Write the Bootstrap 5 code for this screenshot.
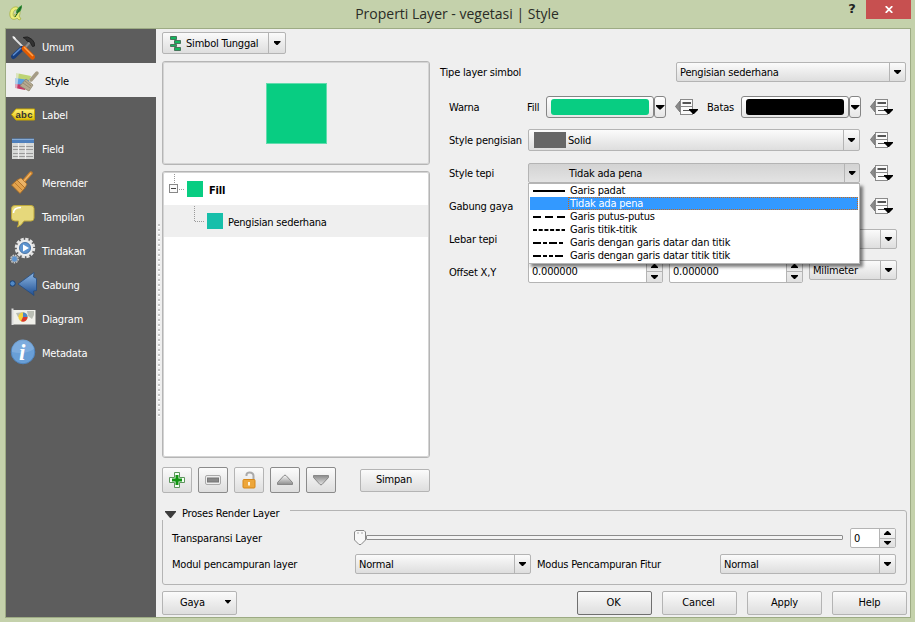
<!DOCTYPE html>
<html lang="id">
<head>
<meta charset="utf-8">
<title>Properti Layer - vegetasi | Style</title>
<link href="https://cdn.jsdelivr.net/npm/bootstrap@5.3.0/dist/css/bootstrap.min.css" rel="stylesheet">
<style>
html,body{height:100%}
body{width:915px;height:622px;overflow:hidden;background:#c4d1ab;font-family:"DejaVu Sans Condensed","DejaVu Sans",sans-serif;font-stretch:condensed;font-size:11px;line-height:14px;letter-spacing:-.2px;color:#000}
.titlebar{height:28px;padding-left:9px}
.title-text{font:14px/28px "Open Sans",sans-serif;letter-spacing:0;color:#2a2c26;padding:0 0 0 51px}
.title-help{font:bold 13px/18px "DejaVu Sans",sans-serif;width:28px;color:#222}
.title-close{width:45px;height:19px;background:#c75050;margin-right:4px}
.frame{margin:0 4px 0 5px;height:590px;border:1px solid #9dab84;background:#efefef}
.sidebar{width:150px;background:#5d5d5d;border-radius:0}
.sidebar .list-group-item{height:34px;padding:3px 0 0 4px;border:0;border-radius:0;background:transparent;color:#fff;gap:4px}
.sidebar .list-group-item.active{background:#efefef;color:#000;padding-left:7px;margin:0}
.sidebar svg{width:28px;height:28px;flex:none;margin-top:-2px}
.splitter{width:6px;padding:195px 2px 0 2px}
.splitter div{height:194px;background:repeating-linear-gradient(#c4c4c4 0 2px,#fff 2px 3px,transparent 3px 5px)}
.content-area{width:748px;padding-top:3px}
.leftcol{width:268px}
.rightcol{width:466px;margin-left:10px;padding-top:30px}
.qbtn,.combo{height:23px;border:1px solid #b4b4b4;border-radius:2px;background:linear-gradient(#fbfbfb,#ececec 50%,#dedede);padding:0;font-size:inherit;line-height:14px;color:#000;letter-spacing:inherit}
.qbtn.dark{border-color:#8b8b8b}
.qbtn.default{border-color:#6f6f6f}
.combo{height:20px;display:flex;align-items:center;padding:1px 0 0 3px;border-width:1px;flex:none}
.combo .drop{margin:-1px 0 0 auto;width:16px}
.drop{align-self:stretch;border-left:1px solid #b4b4b4;display:flex;align-items:center;justify-content:center}
.arr{width:7px;height:4px;background:#000;clip-path:polygon(0 0,100% 0,100% 25%,57% 100%,43% 100%,0 25%)}
.arr.up{transform:rotate(180deg)}
.arr.big{width:9px;height:5px}
.symbtn{width:124px;height:22px}
.preview{height:104px;margin-top:7px;border:1px solid #b5b5b5;outline:1px solid #d4d4d4;outline-offset:-2px;border-radius:3px}
.preview div{width:61px;height:61px;background:#08cd82;border:1px solid #62dcae;margin-left:1px}
.tree{height:287px;margin-top:6px;border:1px solid #b5b5b5;outline:1px solid #d4d4d4;outline-offset:-2px;border-radius:3px;background:#fff;padding:1px}
.trow{height:32px}
.trow.sel{background:#efefef}
.trow b,.trow span{padding-top:3px}
.sw16{width:16px;height:16px;flex:none}
.tools{margin-top:9px;height:26px;gap:6px}
.tools .tool{width:30px;height:26px;display:flex;align-items:center;justify-content:center}
.frow{display:flex;align-items:center}
.frow>span{padding-top:2px}
.frow .lbl{width:79px;margin-left:9px;flex:none;white-space:nowrap}
.colbtn{width:108px;height:22px;border:1px solid #858585;border-radius:3px;background:linear-gradient(#fff,#e6e6e6);padding:2px 4px;flex:none}
.colbtn div{height:16px;border-radius:3px}
.coldrop{width:12px;height:22px;border:1px solid #858585;border-radius:3px;background:linear-gradient(#fff,#e6e6e6);flex:none}
.ddicon{width:24px;height:20px;flex:none}
.spin{height:22px;border:1px solid #b4b4b4;border-radius:2px;background:#fff;padding:1px 0 0 3px;flex:none;overflow:hidden}
.spin .steps{width:16px;margin:-1px 0 0 auto;border-left:1px solid #b4b4b4;background:linear-gradient(#f6f6f6,#e0e0e0);align-self:stretch}
.spin .steps>div{flex:1;display:flex;align-items:center;justify-content:center}
.spin .steps>div+div{border-top:1px solid #b4b4b4}
.popup{position:absolute;left:-1px;top:19px;width:332px;height:81px;z-index:5;background:#fff;border:1px solid #b5b5b5;box-shadow:3px 3px 3px rgba(0,0,0,.5);padding:0 1px}
.popup .opt{height:13px;display:flex;align-items:center;line-height:13px;white-space:nowrap}
.popup .opt svg{width:32px;height:4px;margin:0 5px 0 3px;flex:none}
.popup .opt.on{background:#3399ff;color:#fff}
.popup .opt.on span{outline:1px dotted #c86a1c;outline-offset:-1px;flex:1;line-height:13px;margin-left:38px;padding-left:2px}
.renderbox{width:745px;height:75px;margin-top:16px;border:1px solid #b4b4b4;border-radius:3px}
.legend-lbl{width:128px;height:18px;margin:-9px 0 0 -1px;background:#efefef;padding:6px 0 0 3px}
.footer-row{width:745px;margin-top:6px;height:24px}
.footer-row .qbtn{width:75px;height:24px}
.groove{height:5px;width:477px;border:1px solid #8c8c8c;background:#f4f4f4;border-radius:1px;margin-top:-1px}
</style>
<script src="https://cdn.jsdelivr.net/npm/bootstrap@5.3.0/dist/js/bootstrap.bundle.min.js"></script>
</head>
<body>
<svg width="0" height="0" class="d-block" style="height:0">
<defs>
<linearGradient id="gb" x1="0" y1="0" x2="0" y2="1"><stop offset="0" stop-color="#8fb8e4"/><stop offset="1" stop-color="#1f4f93"/></linearGradient>
<linearGradient id="gg" x1="0" y1="0" x2="0" y2="1"><stop offset="0" stop-color="#fafafa"/><stop offset="1" stop-color="#8e8e8e"/></linearGradient>
<linearGradient id="gd" x1="0" y1="0" x2="0" y2="1"><stop offset="0" stop-color="#8a8a8a"/><stop offset="1" stop-color="#e4e4e4"/></linearGradient>
<linearGradient id="gy" x1="0" y1="0" x2="0" y2="1"><stop offset="0" stop-color="#fff27a"/><stop offset="1" stop-color="#dfbf00"/></linearGradient>
<symbol id="dd" viewBox="0 0 24 20"><path d="M1.500 9.500 6 4V15Z" fill="#8a8a8a" stroke="#777"/><rect x="6.500" y="2.500" width="12" height="15" fill="#fafafa" stroke="#8a8a8a"/><path d="M6 9.500H19" stroke="#8a8a8a"/><path d="M8.500 6H17" stroke="#555" stroke-width="2"/><path d="M9 13.500H17" stroke="#555"/><path d="M15 12H24V13L20 17H19L15 13Z" fill="#000"/></symbol>
</defs>
</svg>

<header class="titlebar d-flex">
  <svg width="16" height="28" viewBox="0 0 16 28"><path d="M8 7C3 6 0 11 1 16c1 4 5 4 7 2l2 2 2-1-2-3c2-3 1-8-2-9Zm-2 3c4-1 3 3 2 5l-2-1-1 1 1 2c-3 0-2-6 0-7Z" fill="#ecee7c" stroke="#a2ad3c" stroke-width=".7"/><path d="M13 5C9 7 7 10 7 13c4 0 6-3 6-8Z" fill="#2c8a32"/><path d="M12 7 6 17" stroke="#165d20"/></svg>
  <div class="title-text flex-grow-1 text-center">Properti Layer - vegetasi | Style</div>
  <div class="title-help text-center">?</div>
  <div class="title-close d-flex align-items-center justify-content-center"><svg width="8" height="7" viewBox="0 0 8 7"><path d="M.7.2 7.300 6.800M7.300.2.7 6.800" stroke="#fff" stroke-width="1.800"/></svg></div>
</header>

<div class="frame d-flex">
  <nav class="sidebar list-group">
    <div class="list-group-item d-flex align-items-center"><svg viewBox="0 0 28 28"><path d="M3 4 16 17" stroke="#ddd" stroke-width="1.800"/><path d="M2 3 5 4 6 7Z" fill="#fff"/><path d="M21 8 13 17" stroke="#8d8d8d" stroke-width="2"/><path d="M13 4.500Q18 2.500 22 6.500Q25 9 24.500 13L22.500 13.500 20 9 17 8 15.500 5.800Z" fill="#333" stroke="#222"/><path d="M3.500 23.500 12 15.500" stroke="#183e7d" stroke-width="5" stroke-linecap="round"/><path d="M3 22.500 11 15" stroke="#5e8ed0" stroke-width="1.500"/><path d="M14 15.500 22.500 24" stroke="#e25a00" stroke-width="5" stroke-linecap="round"/><path d="M14 14 23 23" stroke="#ffa14a" stroke-width="1.500"/></svg>Umum</div>
    <div class="list-group-item active d-flex align-items-center"><svg viewBox="0 0 28 28"><path d="M3 6 18 9 16 14 3 12Z" fill="#bdd474"/><path d="M2 11 16 13 14 19 2 18Z" fill="#5aa0e0"/><path d="M2 17 13 18 12 23 2 21Z" fill="#c73767"/><path d="M1 5H6L4 23H1Z" fill="#efefef" opacity=".6"/><path d="M24 6 18 13" stroke="#a59c86" stroke-width="3.500" stroke-linecap="round"/><path d="M13 12 20 18 16 24 7 19Z" fill="#b5aa91" stroke="#8e866f" stroke-width=".8"/><path d="M12 14 18 19M10 16 17 21" stroke="#968b73"/></svg>Style</div>
    <div class="list-group-item d-flex align-items-center"><svg viewBox="0 0 28 28"><path d="M1.500 13.500 6 8H24.500V19H6Z" fill="url(#gy)" stroke="#c9a800"/><text x="5.500" y="16.500" font-family="Liberation Sans" font-weight="bold" font-size="9.500" letter-spacing="0" fill="#333" textLength="17">abc</text></svg>Label</div>
    <div class="list-group-item d-flex align-items-center"><svg viewBox="0 0 28 28"><path d="M2 4H24V24H2Z" fill="#d7d9d7"/><path d="M2 3.500H24V8H2Z" fill="#4e80bd"/><path d="M2 4.500H24" stroke="#85aad5"/><path d="M3 11.500H23M3 14.500H23M3 18.500H23M3 21.500H23" stroke="#999"/><path d="M8.500 8V24M15.500 8V24" stroke="#eee" stroke-width="1.200"/></svg>Field</div>
    <div class="list-group-item d-flex align-items-center"><svg viewBox="0 0 28 28"><path d="M21 4 13 13" stroke="#c9812c" stroke-width="3.500" stroke-linecap="round"/><path d="M21 4 14 12" stroke="#f0b66a" stroke-width="1.300"/><path d="M7 11 15 19 10 24.500 1.500 16Z" fill="#e2a24d" stroke="#a76920" stroke-width=".8"/><path d="M7 11 11 9 17 15 15 19Z" fill="#eab266" stroke="#a76920" stroke-width=".7"/><path d="M5 14 12 21" stroke="#bb7c30"/></svg>Merender</div>
    <div class="list-group-item d-flex align-items-center"><svg viewBox="0 0 28 28"><path d="M5 2.500H21Q24 2.500 24 5.500V15Q24 18 21 18H14Q12 22 7.500 24Q9 21 8.500 18H5Q1.500 18 1.500 15V5.500Q1.500 2.500 5 2.500Z" fill="#e6d87b" stroke="#bfa93c"/><path d="M3.500 10Q3.500 4.500 11 4.500" stroke="#fff" stroke-width="1.500" fill="none"/></svg>Tampilan</div>
    <div class="list-group-item d-flex align-items-center"><svg viewBox="0 0 28 28"><circle cx="15" cy="11" r="9" fill="none" stroke="#e3e3e3" stroke-width="2.500" stroke-dasharray="3.200 1.510"/><circle cx="15" cy="11" r="7" fill="#5e94cf" stroke="#ececec" stroke-width="2.500"/><circle cx="15" cy="11" r="5.600" fill="none" stroke="#3b6596" stroke-width=".7"/><path d="M13 7.500 19 11 13 14.500Z" fill="#fff"/><circle cx="4.500" cy="22" r="3.700" fill="none" stroke="#ccc" stroke-width="1.500" stroke-dasharray="1.500 1"/><circle cx="4.500" cy="22" r="3" fill="#5e94cf" stroke="#bbb" stroke-width=".6"/></svg>Tindakan</div>
    <div class="list-group-item d-flex align-items-center"><svg viewBox="0 0 28 28"><circle cx="2.500" cy="12.500" r="2.700" fill="#5189c7" stroke="#173f73"/><path d="M8 13 24 1.500 23.500 6 26.500 7.500V19.500L23.500 20 24 24.500Z" fill="url(#gb)" stroke="#234b80" stroke-width=".8"/></svg>Gabung</div>
    <div class="list-group-item d-flex align-items-center"><svg viewBox="0 0 28 28"><path d="M3 5H25.500V19.500H3Z" fill="#f0f0ea"/><path d="M6 8 14 7 12 12 8 12ZM17 6H24V10L22 14 18 11Z" fill="#b9bdb3"/><path d="M2.500 3.500V20" stroke="#ddd" stroke-width="2"/><circle cx="13" cy="12" r="4.600" fill="#f4d13d"/><path d="M13 12V7.400A4.600 4.600 0 0 1 17.600 12Z" fill="#4b86c8"/><path d="M13 12H17.600A4.600 4.600 0 0 1 11 16.200Z" fill="#d93630"/></svg>Diagram</div>
    <div class="list-group-item d-flex align-items-center"><svg viewBox="0 0 28 28"><circle cx="13" cy="13" r="11.800" fill="#699fd7" stroke="#4f84bd"/><path d="M2 13A11 11 0 0 1 24 10Q15 16 2 13Z" fill="#8bb6e2" opacity=".6"/><text x="9" y="21" font-family="Liberation Serif" font-style="italic" font-weight="bold" font-size="23" fill="#fff">i</text></svg>Metadata</div>
  </nav>
  <div class="splitter"><div></div></div>

  <main class="content-area">
    <div class="d-flex">
      <section class="leftcol">
        <button class="btn qbtn symbtn d-flex align-items-center"><svg width="12" height="16" viewBox="0 0 12 16" class="flex-shrink-0" style="margin:0 4px 0 7px"><g fill="#12b75d" stroke="#47755b"><path d="M.5 1.500H6.500V4.500H.5ZM4.500 5.500H10.500V8.500H4.500ZM.5 9.500H6.500V11.500H.5ZM4.500 12.500H10.500V15.500H4.500Z"/></g></svg><span style="margin-top:1px">Simbol Tunggal</span><span class="drop ms-auto" style="width:17px"><i class="arr"></i></span></button>
        <div class="preview d-flex align-items-center justify-content-center"><div></div></div>
        <div class="tree">
          <div class="trow d-flex align-items-center"><svg width="18" height="32" viewBox="0 0 18 32" class="flex-shrink-0" style="margin-left:4px"><path d="M6.500 1V10" stroke="#999" stroke-dasharray="1 1"/><rect x="1.500" y="11.500" width="8" height="8" fill="#fafafa" stroke="#888"/><path d="M3 15.500H8" stroke="#444"/><path d="M11 16.500H16" stroke="#999" stroke-dasharray="1 1"/></svg><i class="sw16" style="background:#08cd82;margin:0 6px 0 1px"></i><b>Fill</b></div>
          <div class="trow sel d-flex align-items-center"><svg width="12" height="32" viewBox="0 0 12 32" class="flex-shrink-0" style="margin-left:30px"><path d="M.5 1V16.500H11" fill="none" stroke="#999" stroke-dasharray="1 1"/></svg><i class="sw16" style="background:#17bfaa;margin:0 5px 0 1px"></i><span>Pengisian sederhana</span></div>
        </div>
        <div class="tools d-flex align-items-center">
          <button class="btn qbtn tool"><svg width="16" height="16" viewBox="0 0 16 16"><path d="M5.500.5H10.500V5.500H15.500V10.500H10.500V15.500H5.500V10.500H.5V5.500H5.500Z" fill="#f4fff4" stroke="#5d955d" stroke-linejoin="round"/><path d="M8 3V13M3 8H13" stroke="#129512" stroke-width="3"/></svg></button>
          <button class="btn qbtn dark tool"><svg width="16" height="10" viewBox="0 0 16 10"><rect x=".5" y=".5" width="15" height="9" rx="1.500" fill="#eee" stroke="#aaa"/><rect x="2.500" y="3" width="11" height="4" fill="#888" stroke="#777"/></svg></button>
          <button class="btn qbtn tool"><svg width="16" height="18" viewBox="0 0 16 18"><path d="M5.500 5V3.500Q6 1.500 8.500 1.500Q12.500 1.500 12.500 5V9" fill="none" stroke="#aaa" stroke-width="2"/><rect x="2" y="8.500" width="12" height="8.500" rx="1" fill="#eda63a" stroke="#d58718"/><path d="M8 11V14.500" stroke="#fff3d8" stroke-width="2"/></svg></button>
          <button class="btn qbtn dark tool"><svg width="18" height="12" viewBox="0 0 18 12"><path d="M8 1.500Q9 .8 10 1.500L16.500 8.500V10.500H1.500V8.500Z" fill="url(#gg)" stroke="#888"/></svg></button>
          <button class="btn qbtn dark tool"><svg width="18" height="12" viewBox="0 0 18 12"><path d="M8 10.500Q9 11.200 10 10.500L16.500 3.500V1.500H1.500V3.500Z" fill="url(#gd)" stroke="#888"/></svg></button>
          <button class="btn qbtn ms-auto" style="width:70px;padding-right:2px">Simpan</button>
        </div>
      </section>

      <section class="rightcol">
        <div class="frow" style="height:20px"><span>Tipe layer simbol</span><div class="combo ms-auto" style="width:230px">Pengisian sederhana<span class="drop"><i class="arr"></i></span></div></div>
        <div class="frow" style="height:22px;margin-top:14px"><span class="lbl" style="width:78px">Warna</span><span style="width:19px">Fill</span><div class="colbtn"><div style="background:#08cd82"></div></div><div class="coldrop d-flex align-items-center justify-content-center"><i class="arr big flex-shrink-0"></i></div><svg class="ddicon" style="margin-left:8px"><use href="#dd"/></svg><span style="width:34px;margin-left:9px">Batas</span><div class="colbtn"><div style="background:#000"></div></div><div class="coldrop d-flex align-items-center justify-content-center"><i class="arr big flex-shrink-0"></i></div><svg class="ddicon" style="margin-left:8px"><use href="#dd"/></svg></div>
        <div class="frow" style="height:22px;margin-top:11px"><span class="lbl">Style pengisian</span><div class="combo" style="width:332px;height:22px"><i style="width:32px;height:16px;background:#666;margin:-1px 2px 0"></i>Solid<span class="drop"><i class="arr"></i></span></div><svg class="ddicon" style="margin-left:9px"><use href="#dd"/></svg></div>
        <div class="frow" style="height:20px;margin-top:12px"><span class="lbl">Style tepi</span><div class="combo position-relative" style="width:332px;padding-left:40px;background:linear-gradient(#d3d3d3,#e3e3e3)"><span style="margin-top:1px">Tidak ada pena</span><span class="drop" style="width:15px"><i class="arr"></i></span>
          <div class="popup">
            <div class="opt"><svg><path d="M0 2H32" stroke="#000" stroke-width="2"/></svg>Garis padat</div>
            <div class="opt on"><span>Tidak ada pena</span></div>
            <div class="opt"><svg><path d="M0 2H32" stroke="#000" stroke-width="2" stroke-dasharray="8 4"/></svg>Garis putus-putus</div>
            <div class="opt"><svg><path d="M0 2H32" stroke="#000" stroke-width="2" stroke-dasharray="4 1.700"/></svg>Garis titik-titik</div>
            <div class="opt"><svg><path d="M0 2H32" stroke="#000" stroke-width="2" stroke-dasharray="8 2 4 2"/></svg>Garis dengan garis datar dan titik</div>
            <div class="opt"><svg><path d="M0 2H32" stroke="#000" stroke-width="2" stroke-dasharray="8 2 4 2 4 2"/></svg>Garis dengan garis datar titik titik</div>
          </div></div><svg class="ddicon" style="margin-left:9px"><use href="#dd"/></svg></div>
        <div class="frow" style="height:20px;margin-top:13px"><span class="lbl">Gabung gaya</span><div class="combo" style="width:332px"></div><svg class="ddicon" style="margin-left:9px"><use href="#dd"/></svg></div>
        <div class="frow" style="height:20px;margin-top:13px"><span class="lbl">Lebar tepi</span><div class="spin" style="width:274px;height:20px"></div><div class="combo" style="width:88px;margin-left:7px">Milimeter<span class="drop"><i class="arr"></i></span></div></div>
        <div class="frow" style="height:23px;margin-top:11px"><span class="lbl">Offset X,Y</span>
          <div class="spin d-flex align-items-center" style="width:135px;height:23px">0.000000<div class="steps d-flex flex-column"><div><i class="arr up"></i></div><div><i class="arr"></i></div></div></div>
          <div class="spin d-flex align-items-center" style="width:134px;height:23px;margin-left:6px">0.000000<div class="steps d-flex flex-column"><div><i class="arr up"></i></div><div><i class="arr"></i></div></div></div>
          <div class="combo align-self-start" style="width:88px;margin-left:6px">Milimeter<span class="drop"><i class="arr"></i></span></div></div>
      </section>
    </div>

    <section class="renderbox" style="margin-top:17px">
      <div class="legend-lbl d-flex align-items-center"><svg width="11" height="7" viewBox="0 0 11 7"><path d="M0 0H11V1L6 7H5L0 1Z" fill="#3c3c3c"/></svg><span style="margin-left:6px">Proses Render Layer</span></div>
      <div class="d-flex align-items-center" style="height:20px;margin:8px 10px 0 9px"><span style="width:182px;padding-top:1px">Transparansi Layer</span><svg width="12" height="17" viewBox="0 0 12 17"><path d="M2 .5H10L11.500 2V10L7 14.500H5L.5 10V2Z" fill="#f8f8f8" stroke="#888"/><path d="M3 3H5M7 3H9" stroke="#aaa"/></svg><div class="groove"></div><div class="spin d-flex align-items-center ms-auto" style="width:46px;height:20px">0<div class="steps d-flex flex-column"><div><i class="arr up"></i></div><div><i class="arr"></i></div></div></div></div>
      <div class="d-flex align-items-center" style="height:20px;margin:6px 10px 0 9px"><span style="width:183px;padding-top:2px">Modul pencampuran layer</span><div class="combo" style="width:176px">Normal<span class="drop"><i class="arr"></i></span></div><span style="margin-left:6px;padding-top:2px">Modus Pencampuran Fitur</span><div class="combo ms-auto" style="width:176px">Normal<span class="drop"><i class="arr"></i></span></div></div>
    </section>

    <div class="footer-row d-flex">
      <button class="btn qbtn me-auto d-flex align-items-center" style="padding-left:17px">Gaya<i class="arr" style="margin:-3px 0 0 20px;width:6px"></i></button>
      <div class="d-flex" style="gap:10px"><button class="btn qbtn default" style="padding-right:2px">OK</button><button class="btn qbtn" style="padding-right:2px">Cancel</button><button class="btn qbtn">Apply</button><button class="btn qbtn">Help</button></div>
    </div>
  </main>
</div>
</body>
</html>
